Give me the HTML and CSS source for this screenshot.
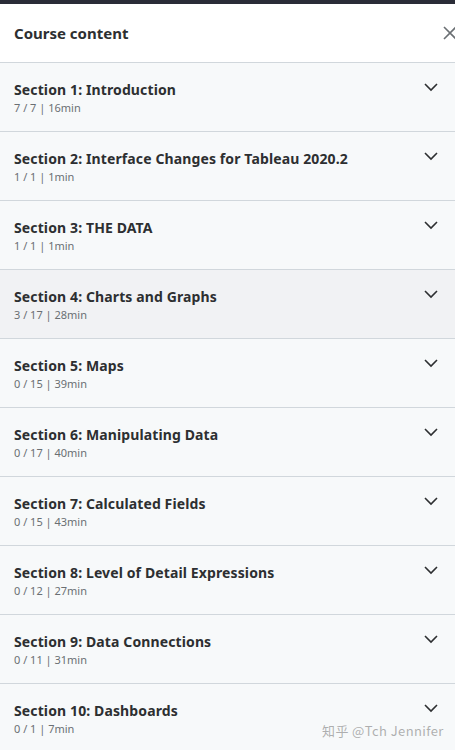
FILE: index.html
```html
<!DOCTYPE html>
<html>
<head>
<meta charset="utf-8">
<link rel="stylesheet" href="styles.css">
</head>
<body>
<div class="topbar"></div>
<div class="panel">
  <header class="header">
    <h2 class="header-title">Course content</h2>
    <button class="close" aria-label="Close">
      <svg width="16" height="16" viewBox="0 0 16 16"><path d="M2 2L14 14M14 2L2 14" stroke="#6a6f73" stroke-width="1.6" fill="none"/></svg>
    </button>
  </header>
  <ul class="sections">
    <li class="section"><div class="info"><div class="title">Section 1: Introduction</div><div class="meta">7 / 7 | 16min</div></div><svg class="chev" viewBox="0 0 24 24"><path d="M6 9l6 6 6-6"/></svg></li>
    <li class="section"><div class="info"><div class="title">Section 2: Interface Changes for Tableau 2020.2</div><div class="meta">1 / 1 | 1min</div></div><svg class="chev" viewBox="0 0 24 24"><path d="M6 9l6 6 6-6"/></svg></li>
    <li class="section"><div class="info"><div class="title">Section 3: THE DATA</div><div class="meta">1 / 1 | 1min</div></div><svg class="chev" viewBox="0 0 24 24"><path d="M6 9l6 6 6-6"/></svg></li>
    <li class="section hover"><div class="info"><div class="title">Section 4: Charts and Graphs</div><div class="meta">3 / 17 | 28min</div></div><svg class="chev" viewBox="0 0 24 24"><path d="M6 9l6 6 6-6"/></svg></li>
    <li class="section"><div class="info"><div class="title">Section 5: Maps</div><div class="meta">0 / 15 | 39min</div></div><svg class="chev" viewBox="0 0 24 24"><path d="M6 9l6 6 6-6"/></svg></li>
    <li class="section"><div class="info"><div class="title">Section 6: Manipulating Data</div><div class="meta">0 / 17 | 40min</div></div><svg class="chev" viewBox="0 0 24 24"><path d="M6 9l6 6 6-6"/></svg></li>
    <li class="section"><div class="info"><div class="title">Section 7: Calculated Fields</div><div class="meta">0 / 15 | 43min</div></div><svg class="chev" viewBox="0 0 24 24"><path d="M6 9l6 6 6-6"/></svg></li>
    <li class="section"><div class="info"><div class="title">Section 8: Level of Detail Expressions</div><div class="meta">0 / 12 | 27min</div></div><svg class="chev" viewBox="0 0 24 24"><path d="M6 9l6 6 6-6"/></svg></li>
    <li class="section"><div class="info"><div class="title">Section 9: Data Connections</div><div class="meta">0 / 11 | 31min</div></div><svg class="chev" viewBox="0 0 24 24"><path d="M6 9l6 6 6-6"/></svg></li>
    <li class="section"><div class="info"><div class="title">Section 10: Dashboards</div><div class="meta">0 / 1 | 7min</div></div><svg class="chev" viewBox="0 0 24 24"><path d="M6 9l6 6 6-6"/></svg></li>
  </ul>
</div>
<div class="watermark">知乎 @Tch Jennifer</div>
</body>
</html>
```
FILE: styles.css
```css
* { box-sizing: border-box; }
html, body { margin: 0; padding: 0; }
body {
  width: 455px;
  overflow: hidden;
  background: #f7f9fa;
  font-family: "Noto Sans", "Open Sans", sans-serif;
  color: #2d2f31;
}
.topbar { height: 4px; background: #2a2c37; }
.panel { width: 455px; }
.header {
  height: 59px;
  background: #fff;
  border-bottom: 1px solid #d1d7dc;
  display: flex;
  align-items: center;
  justify-content: space-between;
  padding-left: 14px;
  position: relative;
}
.header-title {
  margin: 0;
  font-size: 15px;
  font-weight: 700;
  line-height: 20px;
}
.close {
  position: absolute;
  right: -3px;
  top: 21px;
  border: 0;
  background: none;
  padding: 0;
  width: 16px;
  height: 16px;
}
.close svg { display: block; }
.sections { list-style: none; margin: 0; padding: 0; }
.section {
  height: 69px;
  border-bottom: 1px solid #d1d7dc;
  display: flex;
  justify-content: space-between;
  align-items: flex-start;
  padding: 16px 12px 0 14px;
  background: #f7f9fa;
}
.section.hover { background: #f1f2f4; }
.title {
  font-size: 14px;
  font-weight: 700;
  line-height: 22px;
  letter-spacing: 0.12px;
}
.meta {
  font-size: 11px;
  line-height: 14px;
  color: #6a6f73;
}
.chev {
  width: 24px;
  height: 24px;
  margin-top: -4px;
  flex: none;
  fill: none;
  stroke: #2d2f31;
  stroke-width: 1.6;
}
.watermark {
  position: absolute;
  left: 322px;
  top: 721px;
  font-family: "Noto Sans CJK SC", "Noto Sans", sans-serif;
  font-size: 13px;
  color: rgba(150, 150, 150, 0.75);
  letter-spacing: 0.4px;
}
```
